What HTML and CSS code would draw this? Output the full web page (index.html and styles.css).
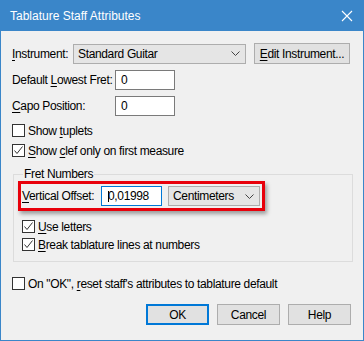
FILE: index.html
```html
<!DOCTYPE html>
<html>
<head>
<meta charset="utf-8">
<link rel="stylesheet" href="styles.css">
</head>
<body>
<div class="window">
  <div class="titlebar">
    <span class="title">Tablature Staff Attributes</span>
    <svg class="close" width="12" height="12" viewBox="0 0 12 12"><path d="M1 1 L11 11 M11 1 L1 11" stroke="#fff" stroke-width="1.1" fill="none"/></svg>
  </div>
  <div class="content">
    <div class="row r1">
      <span class="lbl lbl-inst"><u>I</u>nstrument:</span>
      <div class="combo combo-inst"><span>Standard Guitar</span><svg class="chev" width="9" height="5" viewBox="0 0 9 5"><path d="M0.5 0.5 L4.5 4.5 L8.5 0.5" stroke="#444" fill="none"/></svg></div>
      <div class="btn btn-edit"><u>E</u>dit Instrument...</div>
    </div>
    <div class="row r2">
      <span class="lbl lbl-num">Default <u>L</u>owest Fret:</span>
      <div class="input input-num">0</div>
    </div>
    <div class="row r3">
      <span class="lbl lbl-num"><u>C</u>apo Position:</span>
      <div class="input input-num">0</div>
    </div>
    <div class="check c1"><span class="box"></span><span>Show <u>t</u>uplets</span></div>
    <div class="check c2"><span class="box"><svg width="11" height="11" viewBox="0 0 11 11"><path d="M1.5 5.5 L4 8.5 L9.5 1.5" stroke="#333" stroke-width="1" fill="none"/></svg></span><span><u>S</u>how <u>c</u>lef only on first measure</span></div>
    <fieldset class="group">
      <legend>Fret Numbers</legend>
      <div class="highlight">
        <span class="lbl lbl-vo"><u>V</u>ertical Offset:</span>
        <div class="input input-vo"><span class="caret"></span>0,01998</div>
        <div class="combo combo-unit"><span>Centimeters</span><svg class="chev" width="9" height="5" viewBox="0 0 9 5"><path d="M0.5 0.5 L4.5 4.5 L8.5 0.5" stroke="#444" fill="none"/></svg></div>
      </div>
      <div class="check c3"><span class="box"><svg width="11" height="11" viewBox="0 0 11 11"><path d="M1.5 5.5 L4 8.5 L9.5 1.5" stroke="#333" stroke-width="1" fill="none"/></svg></span><span><u>U</u>se letters</span></div>
      <div class="check c4"><span class="box"><svg width="11" height="11" viewBox="0 0 11 11"><path d="M1.5 5.5 L4 8.5 L9.5 1.5" stroke="#333" stroke-width="1" fill="none"/></svg></span><span><u>B</u>reak tablature lines at numbers</span></div>
    </fieldset>
    <div class="check c5"><span class="box"></span><span>On "OK", <u>r</u>eset staff's attributes to tablature default</span></div>
    <div class="buttons">
      <div class="btn btn-ok">OK</div>
      <div class="btn">Cancel</div>
      <div class="btn">Help</div>
    </div>
  </div>
</div>
</body>
</html>
```
FILE: styles.css
```css
* { box-sizing: border-box; }
html, body { margin: 0; padding: 0; background: #f0f0f0; }
body {
  font-family: "Liberation Sans", Arial, sans-serif;
  font-size: 12px;
  letter-spacing: -0.35px;
  color: #000;
}
u { text-decoration: underline; text-underline-offset: 2px; }
.window {
  width: 364px;
  height: 341px;
  border: 1px solid #3a86c9;
  border-top: none;
  background: #f0f0f0;
  display: flex;
  flex-direction: column;
}
.titlebar {
  height: 31px;
  margin: 0 -1px;
  background: #3a86c9;
  color: #fff;
  display: flex;
  align-items: center;
  justify-content: space-between;
  padding: 0 11px 0 10px;
  font-size: 12px;
  letter-spacing: 0;
}
.close { display: block; }
.content {
  padding: 12px 11px 0 11px;
  display: flex;
  flex-direction: column;
}
.row { display: flex; align-items: center; }
.r1 { height: 21px; }
.r2 { margin-top: 6px; height: 20px; }
.r3 { margin-top: 6px; height: 20px; }
.lbl { white-space: nowrap; flex: none; }
.lbl-inst { width: 61px; }
.lbl-num { width: 103px; }
.combo {
  height: 20px;
  background: #e5e5e5;
  border: 1px solid #adadad;
  display: flex;
  align-items: center;
  justify-content: space-between;
  padding: 0 5px 0 4px;
  flex: none;
}
.combo-inst { width: 173px; }
.chev { display: block; }
.btn {
  height: 21px;
  width: 63px;
  background: #e1e1e1;
  border: 1px solid #adadad;
  display: flex;
  align-items: center;
  justify-content: center;
  white-space: nowrap;
  flex: none;
}
.btn-edit { margin-left: 8px; width: 96px; }
.input {
  height: 20px;
  background: #fff;
  border: 1px solid #7a7a7a;
  display: flex;
  align-items: center;
  padding-left: 5px;
  position: relative;
  flex: none;
}
.input-num { width: 60px; }
.check { display: flex; align-items: center; height: 17px; gap: 3px; white-space: nowrap; }
.box {
  width: 13px;
  height: 13px;
  border: 1px solid #333;
  background: #fff;
  display: flex;
  align-items: center;
  justify-content: center;
  flex: none;
}
.box svg { display: block; }
.c1 { margin-top: 6px; }
.c2 { margin-top: 3px; }
.group {
  margin: 8px 0 0 1px;
  padding: 0 0 8px 4px;
  width: 340px;
  border: 1px solid #dcdcdc;
  min-width: 0;
}
.group legend {
  padding: 0 1px;
  margin-left: 5px;
  line-height: 14px;
}
.highlight {
  width: 247px;
  height: 30px;
  border: 3px solid #e8000b;
  box-shadow: 2px 3px 4px rgba(0,0,0,0.35);
  display: flex;
  align-items: center;
  padding: 0 2px 0 1px;
}
.lbl-vo { width: 79px; }
.input-vo { width: 61px; padding-left: 6px; border-color: #0078d7; }
.caret {
  position: absolute;
  left: 6px;
  top: 4px;
  width: 1px;
  height: 11px;
  background: #000;
}
.combo-unit { margin-left: 6px; width: 92px; height: 20px; }
.c3 { margin: 7px 0 0 4px; }
.c4 { margin: 1px 0 0 4px; }
.c5 { margin-top: 13px; }
.buttons {
  margin-top: 12px;
  display: flex;
  justify-content: flex-end;
  gap: 8px;
  padding-right: 1px;
}
.btn-ok { border: 2px solid #0078d7; }
```
